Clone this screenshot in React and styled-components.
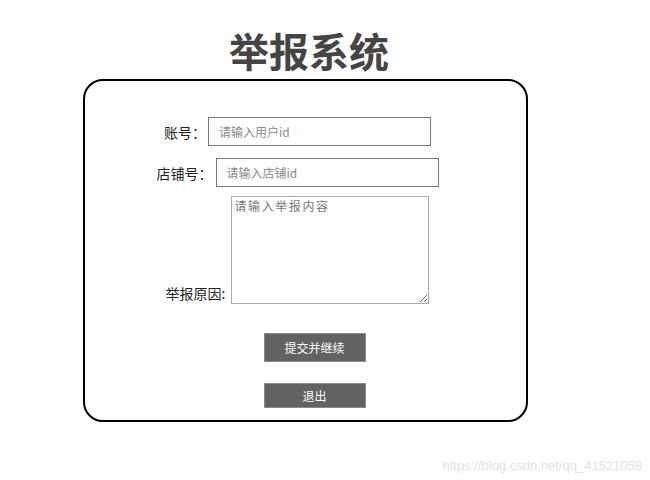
import styled, { createGlobalStyle } from "styled-components";

const GlobalStyle = createGlobalStyle`
  body {
    margin: 0;
    background: #fff;
    font-family: "Noto Sans CJK SC", "Noto Sans", sans-serif;
  }
`;

const Page = styled.div`
  width: 650px;
  height: 480px;
  padding-top: 26px;
  box-sizing: border-box;
`;

const Title = styled.h1`
  margin: 0;
  padding-right: 32px;
  text-align: center;
  font-size: 40px;
  line-height: 48px;
  font-weight: 700;
  color: #454545;
`;

const Panel = styled.form`
  margin: 5px 0 0 83px;
  width: 445px;
  height: 343px;
  box-sizing: border-box;
  border: 2px solid #000;
  border-radius: 20px;
  padding-top: 36px;
  display: flex;
  flex-direction: column;
`;

const Row = styled.div`
  display: flex;
  justify-content: center;
  align-items: ${(p) => (p.$bottom ? "flex-end" : "center")};
  padding-right: 16px;
  margin-bottom: ${(p) => p.$gap}px;
`;

const Label = styled.label`
  font-size: 14px;
  color: #222;
  margin-right: ${(p) => p.$space || 2}px;
  line-height: ${(p) => (p.$bottom ? "18px" : "20px")};
  margin-bottom: ${(p) => (p.$bottom ? "2px" : "0")};
`;

const TextInput = styled.input`
  width: 223px;
  height: 29px;
  box-sizing: border-box;
  border: 1px solid #7a7a7a;
  padding: 0 10px;
  font-family: "Noto Sans CJK SC", sans-serif;
  font-size: 12px;
  outline: none;
  &::placeholder {
    color: #8a8a8a;
  }
`;

const Reason = styled.textarea`
  width: 198px;
  height: 108px;
  box-sizing: border-box;
  border: 1px solid #ababab;
  padding: 1px 2px;
  font-family: "Noto Sans CJK SC", monospace;
  font-size: 12px;
  letter-spacing: 1.6px;
  line-height: 16px;
  resize: both;
  outline: none;
  &::placeholder {
    color: #777;
  }
`;

const Actions = styled.div`
  display: flex;
  flex-direction: column;
  align-items: center;
  padding-left: 18px;
  gap: 21px;
  margin-top: 29px;
`;

const Button = styled.button`
  width: 102px;
  height: ${(p) => p.$h}px;
  background: #626262;
  border: 1px solid #8a8a8a;
  color: #fff;
  font-family: "Noto Sans CJK SC", sans-serif;
  font-size: 12px;
  padding: 0;
  cursor: pointer;
`;

const Watermark = styled.div`
  margin-top: 36px;
  padding-right: 8px;
  text-align: right;
  font-family: "Liberation Sans", Arial, sans-serif;
  font-size: 13px;
  color: #e2e2e2;
`;

function App() {
  return (
    <>
      <GlobalStyle />
      <Page>
        <Title>举报系统</Title>
        <Panel onSubmit={(e) => e.preventDefault()}>
          <Row $gap={12}>
            <Label>账号：</Label>
            <TextInput placeholder="请输入用户id" />
          </Row>
          <Row $gap={9}>
            <Label $space={3}>店铺号：</Label>
            <TextInput placeholder="请输入店铺id" />
          </Row>
          <Row $gap={0} $bottom>
            <Label $bottom $space={6}>举报原因:</Label>
            <Reason placeholder="请输入举报内容" />
          </Row>
          <Actions>
            <Button type="submit" $h={29}>提交并继续</Button>
            <Button type="button" $h={25}>退出</Button>
          </Actions>
        </Panel>
        <Watermark>https://blog.csdn.net/qq_41521058</Watermark>
      </Page>
    </>
  );
}

export default App;
